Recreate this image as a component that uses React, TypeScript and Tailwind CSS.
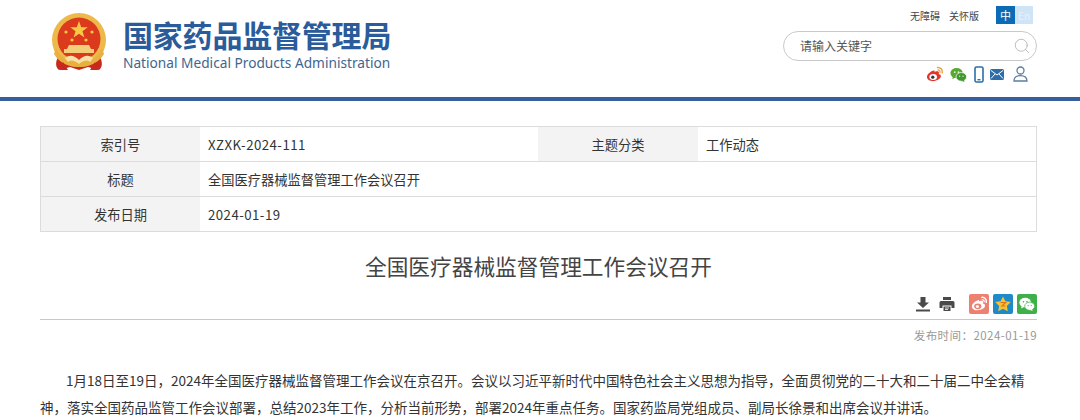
import { Search } from "lucide-react";

const FONT = "font-['Noto_Sans_CJK_SC','Noto_Sans',sans-serif]";

const Emblem = () => (
	<svg width="58" height="60" viewBox="0 0 58 60">
		<path d="M10 42 C4 50 6 56 9 58 L20 55 L29 58 L38 55 L49 58 C52 56 54 50 48 42 Z" fill="#c8281e" />
		<circle cx="29" cy="28" r="27" fill="#edb94a" />
		<circle cx="29" cy="27" r="21.5" fill="#dc3a1c" />
		<path d="M29 9 l2.2 6.2 6.5 .1 -5.2 4 1.9 6.2 -5.4 -3.7 -5.4 3.7 1.9 -6.2 -5.2 -4 6.5 -.1 z" fill="#f5c945" />
		<circle cx="16" cy="20" r="1.6" fill="#f5c945" />
		<circle cx="42" cy="20" r="1.6" fill="#f5c945" />
		<circle cx="22" cy="28" r="1.6" fill="#f5c945" />
		<circle cx="36" cy="28" r="1.6" fill="#f5c945" />
		<path d="M19 33 h20 l2 4 h3 v4 H14 v-4 h3 z" fill="#f3cf7a" />
		<path d="M6 36 C10 46 18 50 29 50 C40 50 48 46 52 36 L54 42 C48 52 38 55 29 55 C20 55 10 52 4 42 Z" fill="#e8b03e" />
		<path d="M15 46 C20 42 25 44 29 48 C33 44 38 42 43 46 L40 50 C36 47 33 49 29 52 C25 49 22 47 18 50 Z" fill="#f6e2a6" />
		<path d="M13 50 l5 8 h-8 z M45 50 l3 8 h-8 z" fill="#c8281e" />
	</svg>
);

const Weibo = ({ size = 18, face = "#e3352f", inner = "#fff", pupil = "#333", arc = "#e8a33a" }: { size?: number; face?: string; inner?: string; pupil?: string; arc?: string }) => (
	<svg width={size} height={size} viewBox="0 0 18 18">
		<path d="M7.5 5.5 C3.5 6.8 .6 10 1 12.6 C1.4 15.4 5 16.6 8.6 16 C12.6 15.3 15.4 13 14.8 10.6 C14.5 9.4 13.3 9.2 12.7 9 C13.3 7.6 13 6.4 11.5 6.2 C10.4 6 9 6.6 8.4 7 C8.8 5.8 8.6 5.2 7.5 5.5 Z" fill={face} />
		<ellipse cx="7.2" cy="12" rx="3.8" ry="3" fill={inner} />
		<circle cx="6.8" cy="12.2" r="1.6" fill={pupil} />
		<path d="M11.5 2.5 C14.5 2.2 16.8 4.6 16.2 7.8" fill="none" stroke={arc} strokeWidth="1.5" strokeLinecap="round" />
		<path d="M11.8 5 C13.3 4.8 14.3 5.9 14 7.3" fill="none" stroke={arc} strokeWidth="1.2" strokeLinecap="round" />
	</svg>
);

const Wechat = ({ size = 18, a = "#5aa832", b = "#3f9a2e", eye = "#e8f5e0", line = "#fff" }: { size?: number; a?: string; b?: string; eye?: string; line?: string }) => (
	<svg width={size} height={size} viewBox="0 0 18 18">
		<ellipse cx="7" cy="7.5" rx="6.6" ry="5.4" fill={a} />
		<path d="M3 11 L2.5 14 L6 12 Z" fill={a} />
		<ellipse cx="12" cy="11.5" rx="5.6" ry="4.6" fill={b} stroke={line} strokeWidth=".8" />
		<path d="M14.5 14.5 L15.5 17 L12 15.5 Z" fill={b} />
		<circle cx="5" cy="6.5" r=".9" fill={eye} />
		<circle cx="9" cy="6.5" r=".9" fill={eye} />
		<circle cx="10.2" cy="10.8" r=".7" fill={eye} />
		<circle cx="13.8" cy="10.8" r=".7" fill={eye} />
	</svg>
);

const Phone = () => (
	<svg width="10" height="17" viewBox="0 0 10 17">
		<rect x="1" y="1" width="8" height="15" rx="1.5" fill="none" stroke="#2f6da8" strokeWidth="1.6" />
		<rect x="3.5" y="13" width="3" height="1.4" fill="#2f6da8" />
	</svg>
);

const Mail = () => (
	<svg width="14" height="11" viewBox="0 0 14 11">
		<rect width="14" height="11" rx="1.5" fill="#2f6da8" />
		<path d="M1 1.5 L7 6 L13 1.5 M1 9.5 L5 5 M13 9.5 L9 5" fill="none" stroke="#fff" strokeWidth="1" />
	</svg>
);

const User = () => (
	<svg width="15" height="16" viewBox="0 0 15 16">
		<circle cx="7.5" cy="4.5" r="3.5" fill="none" stroke="#5d7ca0" strokeWidth="1.3" />
		<path d="M1 15 C1 11.5 3 9.6 7.5 9.6 C12 9.6 14 11.5 14 15 Z" fill="none" stroke="#5d7ca0" strokeWidth="1.3" />
	</svg>
);

const Download = () => (
	<svg width="16" height="16" viewBox="0 0 16 16">
		<path d="M5.5 1 h5 v5.5 h3.5 L8 12 L2 6.5 h3.5 z" fill="#4a4a4a" />
		<rect x="1" y="13.5" width="14" height="2" fill="#4a4a4a" />
	</svg>
);

const Printer = () => (
	<svg width="16" height="16" viewBox="0 0 16 16">
		<path d="M4 1 h8 v3 H4 z" fill="#4a4a4a" />
		<path d="M2 5 h12 a1.5 1.5 0 0 1 1.5 1.5 V12 H12.5 V9.5 h-9 V12 H.5 V6.5 A1.5 1.5 0 0 1 2 5 z" fill="#4a4a4a" />
		<path d="M4.5 10.5 h7 V15 h-7 z" fill="#4a4a4a" />
		<path d="M6 12 h4 M6 13.5 h3" stroke="#fff" strokeWidth=".8" />
	</svg>
);

const QZone = () => (
	<svg width="20" height="20" viewBox="0 0 20 20">
		<path d="M10 2.5 l2.4 4.8 5.4 .8 -3.9 3.8 .9 5.4 -4.8 -2.5 -4.8 2.5 .9 -5.4 -3.9 -3.8 5.4 -.8 z" fill="#f4c430" />
		<path d="M7.5 8.5 h5 l-3.5 3.5 h3.5" fill="none" stroke="#e0702a" strokeWidth="1.2" />
	</svg>
);

const rows = [
	{ label: "索引号", value: "XZXK-2024-111", latin: true, label2: "主题分类", value2: "工作动态" },
	{ label: "标题", value: "全国医疗器械监督管理工作会议召开" },
	{ label: "发布日期", value: "2024-01-19", latin: true },
];

export default function App() {
	return (
		<div className={`w-[1080px] h-[420px] overflow-hidden bg-white text-[#333] ${FONT}`}>
			<header className='h-[101px] border-b-4 border-[#36609c] flex justify-between pl-[50px] pr-[43px]'>
				<div className='flex items-start gap-[15px] pt-[12px]'>
					<Emblem />
					<div className='pt-[2px]'>
						<div className='text-[30px] leading-[40px] font-bold text-[#2a5c9c] tracking-[-0.2px]'>国家药品监督管理局</div>
						<div className="text-[13.7px] leading-[18px] text-[#3f668f] font-['Noto_Sans',sans-serif]">National Medical Products Administration</div>
					</div>
				</div>
				<div className='w-[254px] flex flex-col pt-[6px]'>
					<div className='flex items-center justify-end h-[18px] text-[10px] text-[#444] pr-[4px]'>
						<span>无障碍</span>
						<span className='ml-[9px]'>关怀版</span>
						<span className='ml-[17px] w-[19px] h-[18px] bg-[#0b6cb5] text-white text-[11px] flex items-center justify-center'>中</span>
						<span className='w-[18px] h-[18px] bg-[#cfe4f6] text-[#e8f2fb] text-[10px] flex items-center justify-center'>En</span>
					</div>
					<div className='mt-[7px] h-[30px] rounded-[15px] border border-[#c9c9c9] flex items-center justify-between pl-[16px] pr-[5px]'>
						<input className='w-[180px] text-[12px] outline-none placeholder:text-[#555]' placeholder='请输入关键字' />
						<Search size={18} strokeWidth={1.2} className='text-[#b5b5b5]' />
					</div>
					<div className='flex items-center justify-end mt-[4px] pr-[9px] h-[18px]'>
						<Weibo size={18} />
						<span className='ml-[6px] flex'><Wechat size={17} /></span>
						<span className='ml-[7px] flex'><Phone /></span>
						<span className='ml-[6px] flex'><Mail /></span>
						<span className='ml-[9px] flex'><User /></span>
					</div>
				</div>
			</header>

			<main className='pl-[40px] pr-[43px]'>
				<div className='mt-[25px] border border-[#dcdcdc] text-[13.25px]'>
					{rows.map((r, i) => (
						<div key={r.label} className={`flex ${i < 2 ? "h-[35px] border-b border-[#dcdcdc]" : "h-[34px]"}`}>
							<div className='w-[159px] pt-[2px] bg-[#f3f3f3] flex items-center justify-center'>{r.label}</div>
							<div className={`w-[338px] px-[8px] pt-[2px] flex items-center ${r.latin ? "tracking-[0.45px]" : ""}`}>{r.value}</div>
							{r.label2 && (
								<>
									<div className='w-[160px] pt-[2px] bg-[#f3f3f3] flex items-center justify-center'>{r.label2}</div>
									<div className='px-[8px] pt-[2px] flex items-center'>{r.value2}</div>
								</>
							)}
						</div>
					))}
				</div>

				<h1 className='mt-[18px] text-center text-[21.7px] leading-[32px] text-[#444]'>全国医疗器械监督管理工作会议召开</h1>

				<div className='mt-[11px] h-[27px] flex items-center justify-end border-b border-[#c8c8c8] pb-[5px]'>
					<Download />
					<span className='ml-[8px] flex'><Printer /></span>
					<span className='ml-[14px] w-[20px] h-[20px] rounded-[2px] bg-[#ee8072] flex items-center justify-center'>
						<Weibo size={17} face='#ffffff' inner='#ee8072' pupil='#ffffff' arc='#ffffff' />
					</span>
					<span className='ml-[4px] w-[20px] h-[20px] rounded-[2px] bg-[#1f8ac9] flex items-center justify-center'>
						<QZone />
					</span>
					<span className='ml-[4px] w-[20px] h-[20px] rounded-[2px] bg-[#3eb049] flex items-center justify-center'>
						<Wechat size={16} a='#ffffff' b='#ffffff' eye='#3eb049' line='#3eb049' />
					</span>
				</div>

				<div className='mt-[7px] text-right text-[11.5px] leading-[16px] text-[#999] tracking-[0.45px]'>发布时间：2024-01-19</div>

				<p className='mt-[24px] text-[13.5px] leading-[27px] text-[#333] indent-[26px]'>
					1月18日至19日，2024年全国医疗器械监督管理工作会议在京召开。会议以习近平新时代中国特色社会主义思想为指导，全面贯彻党的二十大和二十届二中全会精神，落实全国药品监管工作会议部署，总结2023年工作，分析当前形势，部署2024年重点任务。国家药监局党组成员、副局长徐景和出席会议并讲话。
				</p>
			</main>
		</div>
	);
}
